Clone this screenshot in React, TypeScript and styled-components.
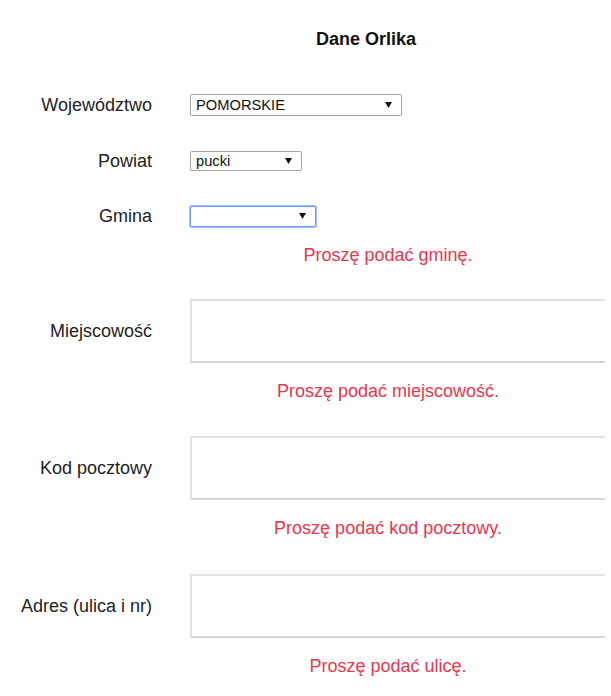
import React from "react";
import styled, { createGlobalStyle, css } from "styled-components";

const GlobalStyle = createGlobalStyle`
  html, body {
    margin: 0;
    padding: 0;
    background: #fff;
  }
  body {
    font-family: "Liberation Sans", Arial, sans-serif;
    color: #222;
  }
`;

const Page = styled.div`
  width: 605px;
  overflow: hidden;
  padding: 28px 0 30px;
`;

const Title = styled.h2`
  margin: 0;
  padding-left: 127px;
  font-size: 18px;
  line-height: 22px;
  font-weight: 700;
  text-align: center;
  color: #111;
`;

const Form = styled.form`
  display: flex;
  flex-direction: column;
`;

const Row = styled.div<{ $mt: number }>`
  display: grid;
  grid-template-columns: 152px 1fr;
  column-gap: 38px;
  align-items: center;
  margin-top: ${({ $mt }) => $mt}px;
`;

const Label = styled.label`
  font-size: 18px;
  line-height: 22px;
  text-align: right;
  white-space: nowrap;
  color: #222;
`;

const SelectWrap = styled.div<{ $w: number; $h: number; $focused?: boolean }>`
  position: relative;
  width: ${({ $w }) => $w}px;
  height: ${({ $h }) => $h}px;
  box-sizing: border-box;
  border: 1px solid #a6a6a6;
  border-radius: 2px;
  background: #fff;
  ${({ $focused }) =>
    $focused &&
    css`
      border-color: #6e9ff2;
      box-shadow: 0 0 0 1px #9dbdf6;
    `}
`;

const NativeSelect = styled.select`
  appearance: none;
  -webkit-appearance: none;
  width: 100%;
  height: 100%;
  border: none;
  outline: none;
  background: transparent;
  padding: 0 20px 0 5px;
  font-family: "Liberation Sans", Arial, sans-serif;
  font-size: 14.7px;
  color: #111;
  cursor: pointer;
`;

const Arrow = styled.svg`
  position: absolute;
  right: 9px;
  top: 50%;
  margin-top: -3px;
  width: 7px;
  height: 6px;
  pointer-events: none;
`;

const TextInput = styled.input`
  width: 440px;
  height: 64px;
  box-sizing: border-box;
  border: 2px solid #e3e3e3;
  border-bottom-color: #d6d6d6;
  background: #fff;
  outline: none;
  padding: 0 10px;
  font-family: "Liberation Sans", Arial, sans-serif;
  font-size: 18px;
`;

const ErrorText = styled.div<{ $mt: number }>`
  margin: ${({ $mt }) => $mt}px 0 0 190px;
  width: 396px;
  font-size: 18px;
  line-height: 22px;
  text-align: center;
  color: #e8364f;
`;

type SelectProps = {
  value: string;
  options: string[];
  width: number;
  height: number;
  focused?: boolean;
};

const Select: React.FC<SelectProps> = ({ value, options, width, height, focused }) => (
  <SelectWrap $w={width} $h={height} $focused={focused}>
    <NativeSelect defaultValue={value}>
      {options.map((o) => (
        <option key={o} value={o}>
          {o}
        </option>
      ))}
    </NativeSelect>
    <Arrow viewBox="0 0 7 6">
      <polygon points="0,0 7,0 3.5,6" fill="#111" />
    </Arrow>
  </SelectWrap>
);

const App: React.FC = () => {
  return (
    <>
      <GlobalStyle />
      <Page>
        <Title>Dane Orlika</Title>
        <Form onSubmit={(e) => e.preventDefault()}>
          <Row $mt={44}>
            <Label>Województwo</Label>
            <Select value="POMORSKIE" options={["POMORSKIE", "MAZOWIECKIE", "MAŁOPOLSKIE"]} width={212} height={22} />
          </Row>
          <Row $mt={34}>
            <Label>Powiat</Label>
            <Select value="pucki" options={["pucki", "gdański", "wejherowski"]} width={112} height={20} />
          </Row>
          <Row $mt={33}>
            <Label>Gmina</Label>
            <Select value="" options={[""]} width={126} height={21} focused />
          </Row>
          <ErrorText $mt={17}>Proszę podać gminę.</ErrorText>

          <Row $mt={33}>
            <Label>Miejscowość</Label>
            <TextInput type="text" />
          </Row>
          <ErrorText $mt={17}>Proszę podać miejscowość.</ErrorText>

          <Row $mt={34}>
            <Label>Kod pocztowy</Label>
            <TextInput type="text" />
          </Row>
          <ErrorText $mt={17}>Proszę podać kod pocztowy.</ErrorText>

          <Row $mt={35}>
            <Label>Adres (ulica i nr)</Label>
            <TextInput type="text" />
          </Row>
          <ErrorText $mt={17}>Proszę podać ulicę.</ErrorText>
        </Form>
      </Page>
    </>
  );
};

export default App;
